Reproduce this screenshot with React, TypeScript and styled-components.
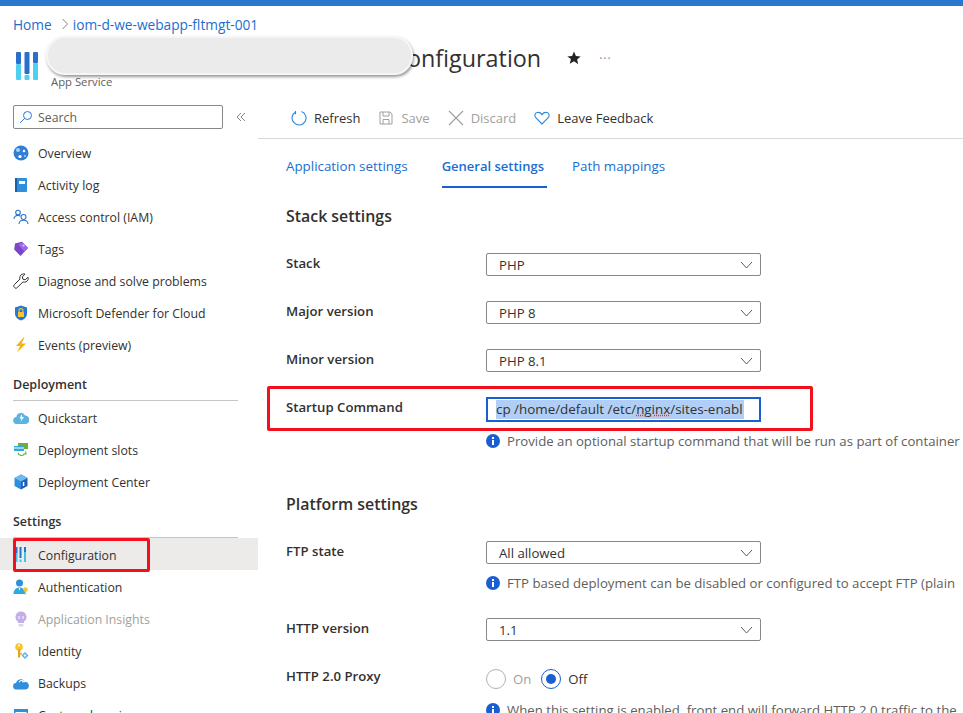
import React from 'react';
import styled, { createGlobalStyle } from 'styled-components';

const GlobalStyle = createGlobalStyle`
  html, body {
    margin: 0;
    padding: 0;
    background: #fff;
  }
  body {
    font-family: "Open Sans", "Noto Sans", "Liberation Sans", sans-serif;
    font-size: 12.3px;
    color: #323130;
  }
`;

const Page = styled.div`
  height: 713px;
  overflow: hidden;
  display: flex;
  flex-direction: column;
`;

const TopBar = styled.div`
  height: 6px;
  flex: none;
  background: #2a77d0;
`;

const Breadcrumb = styled.nav`
  height: 36px;
  flex: none;
  display: flex;
  align-items: center;
  padding-left: 13px;
  white-space: nowrap;
`;

const Crumb = styled.a`
  color: #1b6ed0;
  font-size: 13.7px;
`;

const CrumbSep = styled.svg`
  width: 8px;
  height: 12px;
  margin: 0 4px 0 9px;
  fill: none;
  stroke: #8a8886;
  stroke-width: 1;
`;

const Header = styled.header`
  position: relative;
  height: 58px;
  flex: none;
  display: flex;
  align-items: flex-start;
  padding-left: 16px;
`;

const HeaderLogo = styled.svg`
  width: 23px;
  height: 29px;
  margin-top: 10px;
  flex: none;
`;

const TitleBlock = styled.div`
  margin-left: 12px;
  white-space: nowrap;
`;

const Title = styled.h1`
  margin: 0;
  height: 32px;
  font-size: 23.35px;
  line-height: 32px;
  font-weight: 400;
  color: #323130;
`;

const Subtitle = styled.div`
  font-size: 11.3px;
  line-height: 16px;
  color: #605e5c;
`;

const Redaction = styled.div`
  position: absolute;
  left: 46px;
  top: -6px;
  width: 367px;
  height: 39px;
  box-sizing: border-box;
  border: 2px solid #f6f6f6;
  border-radius: 19px;
  background: #ebebeb;
  box-shadow: 1px 2px 3px rgba(0, 0, 0, 0.4);
`;

const StarIcon = styled.svg`
  width: 14px;
  height: 14px;
  margin: 9px 0 0 26px;
  flex: none;
  fill: #252423;
`;

const More = styled.span`
  margin: 9px 0 0 18px;
  font-size: 12px;
  line-height: 16px;
  letter-spacing: 1px;
  color: #8a8886;
`;

const Body = styled.div`
  flex: 1;
  min-height: 0;
  display: flex;
`;

const Sidebar = styled.aside`
  width: 258px;
  flex: none;
  white-space: nowrap;
`;

const SearchRow = styled.div`
  height: 36px;
  display: flex;
  align-items: flex-start;
  padding: 5px 0 0 13px;
  box-sizing: border-box;
`;

const SearchBox = styled.div`
  width: 210px;
  height: 24px;
  box-sizing: border-box;
  border: 1px solid #8a8886;
  border-radius: 2px;
  display: flex;
  align-items: center;
  padding-left: 5px;
  gap: 5px;
  color: #605e5c;
`;

const CollapseIcon = styled.svg`
  width: 10px;
  height: 10px;
  margin: 7px 0 0 13px;
  fill: none;
  stroke: #8a8886;
  stroke-width: 1;
`;

const NavRow = styled.div<{ $active?: boolean; $muted?: boolean }>`
  position: relative;
  height: 32px;
  display: flex;
  align-items: center;
  padding: 2px 0 0 13px;
  box-sizing: border-box;
  background: ${({ $active }) => ($active ? '#edebe9' : 'transparent')};
  color: ${({ $muted }) => ($muted ? '#a19f9d' : '#323130')};
`;

const NavIcon = styled.svg<{ $muted?: boolean }>`
  width: 16px;
  height: 16px;
  flex: none;
  margin-right: 9px;
  opacity: ${({ $muted }) => ($muted ? 0.5 : 1)};
`;

const SectionTitle = styled.div`
  margin: 13px 20px 0 13px;
  height: 28px;
  box-sizing: border-box;
  border-bottom: 1px solid #c8c6c4;
  font-size: 12.5px;
  font-weight: 600;
  line-height: 24px;
  color: #323130;
`;

const Highlight = styled.div<{ $left: number; $top: number; $width: number; $height: number }>`
  position: absolute;
  left: ${({ $left }) => $left}px;
  top: ${({ $top }) => $top}px;
  width: ${({ $width }) => $width}px;
  height: ${({ $height }) => $height}px;
  box-sizing: border-box;
  border: 3px solid #f2101c;
  border-radius: 2px;
  pointer-events: none;
`;

const Main = styled.main`
  flex: 1;
  min-width: 0;
  white-space: nowrap;
  font-size: 13.2px;
`;

const Toolbar = styled.div`
  height: 39px;
  box-sizing: border-box;
  border-bottom: 1px solid #d8d8d8;
  display: flex;
  align-items: center;
  padding: 0 0 2px 33px;
  gap: 18px;
  font-size: 13px;
`;

const ToolButton = styled.div<{ $disabled?: boolean }>`
  display: flex;
  align-items: center;
  gap: 7px;
  color: ${({ $disabled }) => ($disabled ? '#a19f9d' : '#323130')};
`;

const ToolIcon = styled.svg`
  width: 16px;
  height: 16px;
  flex: none;
  fill: none;
`;

const Tabs = styled.div`
  height: 49px;
  display: flex;
  padding-left: 28px;
`;

const Tab = styled.div<{ $active?: boolean }>`
  height: 49px;
  box-sizing: border-box;
  padding-top: 17px;
  margin-right: ${({ $active }) => ($active ? '25px' : '34px')};
  padding-right: ${({ $active }) => ($active ? '3px' : '0')};
  line-height: 20px;
  color: #1b6ed0;
  font-size: ${({ $active }) => ($active ? '13px' : '13.35px')};
  font-weight: ${({ $active }) => ($active ? 600 : 400)};
  border-bottom: 2px solid ${({ $active }) => ($active ? '#1a5fd0' : 'transparent')};
`;

const Content = styled.div`
  padding-left: 28px;
`;

const Heading = styled.h2<{ $top: number }>`
  margin: ${({ $top }) => $top}px 0 25px;
  height: 23px;
  font-size: 15.9px;
  line-height: 23px;
  font-weight: 600;
  color: #323130;
`;

const Field = styled.div`
  position: relative;
  display: grid;
  grid-template-columns: 200px 275px;
  margin-bottom: 25px;
`;

const FieldLabel = styled.label`
  line-height: 20px;
  font-weight: 600;
  color: #323130;
`;

const Select = styled.div`
  height: 23px;
  box-sizing: border-box;
  border: 1px solid #8a8886;
  border-radius: 2px;
  display: flex;
  align-items: center;
  justify-content: space-between;
  padding: 1px 7px 0 12px;
`;

const Chevron = styled.svg`
  width: 13px;
  height: 8px;
  fill: none;
  stroke: #605e5c;
  stroke-width: 1;
`;

const CommandInput = styled.div`
  height: 25px;
  box-sizing: border-box;
  border: 2px solid #1a5fd0;
  display: flex;
  align-items: center;
  padding-left: 8px;
  overflow: hidden;
`;

const Selected = styled.span`
  display: block;
  width: 248px;
  overflow: hidden;
  font-size: 13.4px;
  line-height: 19px;
  background: #b1cff5;
  color: #323130;
`;

const Misspelled = styled.span`
  text-decoration: underline dotted #e0303a;
`;

const Note = styled.div`
  margin: 9px 0 1px;
  height: 19px;
  width: 476px;
  display: flex;
  align-items: center;
  gap: 7px;
  color: #605e5c;
`;

const InfoIcon = styled.svg`
  width: 14px;
  height: 14px;
  flex: none;
`;

const RadioGroup = styled.div`
  height: 25px;
  margin-bottom: 5px;
  display: flex;
  align-items: center;
`;

const Radio = styled.span<{ $checked?: boolean }>`
  width: 20px;
  height: 20px;
  box-sizing: border-box;
  border-radius: 50%;
  border: 1px solid ${({ $checked }) => ($checked ? '#1a5fd0' : '#b3b0ad')};
  display: flex;
  align-items: center;
  justify-content: center;
  &::after {
    content: '';
    width: 10px;
    height: 10px;
    border-radius: 50%;
    background: ${({ $checked }) => ($checked ? '#1a5fd0' : 'transparent')};
  }
`;

const RadioText = styled.span<{ $muted?: boolean }>`
  margin: 0 10px 0 7px;
  color: ${({ $muted }) => ($muted ? '#a19f9d' : '#323130')};
`;

const logoBars = [
  { x: 0, top: 12, gap: 0 },
  { x: 8.5, top: 22, gap: 1 },
  { x: 17, top: 11, gap: 0 },
];

const AppLogo = () => (
  <>
    {logoBars.map(({ x, top, gap }) => (
      <g key={x}>
        <rect x={x} y="0" width="5" height={top} fill="#2a6fc9" rx="1" />
        <rect x={x} y={top + gap} width="5" height={28 - top - gap} fill="#4fd0f0" rx="1" />
      </g>
    ))}
  </>
);

const Caret = () => (
  <Chevron viewBox="0 0 13 8">
    <path d="M1 1l5.5 6L12 1" />
  </Chevron>
);

const Info = () => (
  <InfoIcon viewBox="0 0 14 14">
    <circle cx="7" cy="7" r="7" fill="#1a5fd0" />
    <rect x="6" y="6" width="2" height="5" fill="#fff" />
    <rect x="6" y="3" width="2" height="2" fill="#fff" />
  </InfoIcon>
);

const icons: Record<string, React.ReactNode> = {
  overview: (
    <>
      <circle cx="8" cy="8" r="7.5" fill="#2f7fd6" />
      <circle cx="5" cy="5" r="2" fill="#a9d3f5" />
      <circle cx="11" cy="6" r="1.3" fill="#fff" />
      <circle cx="7" cy="11.5" r="1.6" fill="#fff" />
      <circle cx="12" cy="11" r="1" fill="#a9d3f5" />
    </>
  ),
  log: (
    <>
      <rect x="2" y="1" width="12" height="14" rx="1" fill="#2f8fdc" />
      <rect x="2" y="1" width="2" height="14" fill="#1b5ea8" />
      <rect x="6" y="4" width="6" height="3" fill="#fff" />
    </>
  ),
  iam: (
    <g fill="none" stroke="#2b78d0" strokeWidth="1.1">
      <circle cx="5" cy="3.6" r="2.3" />
      <path d="M1 10c0-2.4 1.6-3.6 4-3.6 1 0 1.7.2 2.3.5" />
      <circle cx="10.5" cy="8" r="2.5" />
      <path d="M6 15c.2-2.6 2-3.8 4.5-3.8S14.800 12.400 15 15" />
    </g>
  ),
  tags: (
    <>
      <path d="M9 .8l6 6.200-7.500 8-6.300-6.500L2 2.500z" fill="#7a45c9" />
      <path d="M9 .8l6 6.200-3.500 3.700-6-7L9 1z" fill="#9b6be0" />
      <circle cx="10.500" cy="4.500" r="1.100" fill="#d9c6f5" />
    </>
  ),
  wrench: (
    <path
      d="M15 4.200l-2.800 2.600-2.300-.6-.6-2.300L12 1.100c-2-.7-4.200.3-5 2.300-.3.900-.3 1.800 0 2.600L1.200 11.800c-.7.700-.7 1.800 0 2.400l.5.500c.7.700 1.700.7 2.400 0L9.900 9c2.300.7 4.500-.4 5.200-2.500.2-.8.200-1.600-.1-2.300z"
      fill="none"
      stroke="#323130"
      strokeWidth="1"
    />
  ),
  shield: (
    <>
      <path d="M8 .5l6 2v6c0 3.500-2.800 6-6 7-3.200-1-6-3.500-6-7v-6z" fill="#2b78d0" />
      <rect x="5" y="7" width="6" height="5" rx=".6" fill="#f6c52f" />
      <path d="M6 7V5.600a2 2 0 014 0V7" fill="none" stroke="#f6c52f" strokeWidth="1.100" />
    </>
  ),
  bolt: <path d="M10.500 .5L3 9h4l-3 6.500L13 6.500H8.500L11.500.5z" fill="#f5b50f" />,
  quickstart: (
    <>
      <path d="M4 14a3.500 3.500 0 01-.6-7A4.500 4.500 0 0112 5.500 4.200 4.200 0 0112.200 14z" fill="#5bb4df" />
      <path d="M9 4L6.500 8.500h2L7.500 12l3.500-5H9z" fill="#fff" />
    </>
  ),
  slots: (
    <>
      <rect x="5" y="1" width="10" height="6" fill="#6fae3c" />
      <rect x="1" y="4" width="10" height="5" fill="#2fa8e0" />
      <rect x="1" y="5.500" width="10" height="1" fill="#fff" />
      <path d="M5 11c.6 2.800 5 3.600 7 .5M12.800 9.500v2.500h-2.500" fill="none" stroke="#6fae3c" strokeWidth="1.200" />
    </>
  ),
  cube: (
    <>
      <path d="M8 .5l6.500 3.500v8L8 15.500z" fill="#1d5fb8" />
      <path d="M8 .5L1.500 4v8L8 15.500z" fill="#2f8fdc" />
      <path d="M8 .5l6.500 3.500L8 7.500 1.500 4z" fill="#6bbcf0" />
      <rect x="9.800" y="8" width="1.500" height="4" fill="#fff" />
    </>
  ),
  config: (
    <>
      <rect x="2.500" y="0" width="2" height="6" fill="#2a6fc9" />
      <rect x="2.500" y="6" width="2" height="9" fill="#38c4ee" />
      <rect x="6.500" y="0" width="2" height="11" fill="#2a6fc9" />
      <rect x="6.500" y="12.500" width="2" height="2.500" fill="#38c4ee" />
      <rect x="11" y="0" width="2" height="5" fill="#2a6fc9" />
      <rect x="11" y="5" width="2" height="10" fill="#38c4ee" />
    </>
  ),
  auth: (
    <>
      <circle cx="6.500" cy="4" r="3.500" fill="#2f8fdc" />
      <path d="M.5 15c0-4 2.500-6.500 6-6.500s6 2.500 6 6.500z" fill="#2fa8e0" />
      <path d="M5.800 9l.7 3 .7-3z" fill="#fff" />
      <circle cx="12.500" cy="10.500" r="2.300" fill="#f6c52f" />
      <rect x="11.800" y="11" width="1.400" height="4.500" fill="#f6c52f" />
    </>
  ),
  insights: (
    <>
      <path d="M8 .5a5.500 5.500 0 00-3 10.100V12h6v-1.400A5.500 5.500 0 008 .5z" fill="#8a5fd6" />
      <rect x="5.500" y="13" width="5" height="2.500" rx="1" fill="#b9a6e3" />
      <path d="M6 5v3M10 5v3" stroke="#fff" strokeWidth="1" />
    </>
  ),
  identity: (
    <>
      <circle cx="6" cy="4" r="3.800" fill="#f6c52f" />
      <rect x="5" y="6" width="2.200" height="8.500" fill="#e6a90f" />
      <rect x="7" y="10" width="2" height="1.500" fill="#e6a90f" />
      <circle cx="6" cy="2.600" r="1" fill="#fff" />
      <path d="M12 9l3.500 3.500L12 16l-3.500-3.500z" fill="#5bb4df" />
      <path d="M12 11l1.500 1.500L12 14l-1.500-1.500z" fill="#fff" />
    </>
  ),
  backups: (
    <>
      <path d="M3.500 14.500a3.200 3.200 0 01-.4-6.400A5 5 0 0112.500 7a3.800 3.800 0 01.3 7.500z" fill="#2f8fdc" />
      <path d="M6 7.200c1-2 3.500-2.300 5-.9M11.400 4.500v2.200H9.200" fill="none" stroke="#fff" strokeWidth="1.100" />
    </>
  ),
  domains: (
    <>
      <rect x="1" y="2" width="14" height="12" fill="#2f8fdc" />
      <rect x="2.500" y="5" width="11" height="7" fill="#fff" />
    </>
  ),
};

const NavItem = ({
  icon,
  label,
  active,
  muted,
  children,
}: {
  icon: string;
  label: string;
  active?: boolean;
  muted?: boolean;
  children?: React.ReactNode;
}) => (
  <NavRow $active={active} $muted={muted}>
    <NavIcon viewBox="0 0 16 16" $muted={muted}>
      {icons[icon]}
    </NavIcon>
    {label}
    {children}
  </NavRow>
);

const App = () => {
  return (
    <Page>
      <GlobalStyle />
      <TopBar />
      <Breadcrumb>
        <Crumb>Home</Crumb>
        <CrumbSep viewBox="0 0 8 12">
          <path d="M1.500 1l5 5-5 5" />
        </CrumbSep>
        <Crumb>iom-d-we-webapp-fltmgt-001</Crumb>
      </Breadcrumb>
      <Header>
        <HeaderLogo viewBox="0 0 23 29">
          <AppLogo />
        </HeaderLogo>
        <TitleBlock>
          <Title>iom-d-we-webapp-fltmgt-001 | Configuration</Title>
          <Subtitle>App Service</Subtitle>
        </TitleBlock>
        <StarIcon viewBox="0 0 14 14">
          <path d="M7 .5l1.900 4.500 4.800.4-3.600 3.100 1.100 4.700L7 10.200l-4.200 2.500 1.100-4.700L.3 5.400l4.800-.4z" />
        </StarIcon>
        <More>···</More>
        <Redaction />
      </Header>
      <Body>
        <Sidebar>
          <SearchRow>
            <SearchBox>
              <svg width="14" height="14" viewBox="0 0 14 14" fill="none" stroke="#2b78d0" strokeWidth="1">
                <circle cx="8.500" cy="5.500" r="4" />
                <path d="M5.500 8.500L1 13" />
              </svg>
              Search
            </SearchBox>
            <CollapseIcon viewBox="0 0 10 10">
              <path d="M5 1L1 5l4 4M9 1L5 5l4 4" />
            </CollapseIcon>
          </SearchRow>
          <NavItem icon="overview" label="Overview" />
          <NavItem icon="log" label="Activity log" />
          <NavItem icon="iam" label="Access control (IAM)" />
          <NavItem icon="tags" label="Tags" />
          <NavItem icon="wrench" label="Diagnose and solve problems" />
          <NavItem icon="shield" label="Microsoft Defender for Cloud" />
          <NavItem icon="bolt" label="Events (preview)" />
          <SectionTitle>Deployment</SectionTitle>
          <NavItem icon="quickstart" label="Quickstart" />
          <NavItem icon="slots" label="Deployment slots" />
          <NavItem icon="cube" label="Deployment Center" />
          <SectionTitle>Settings</SectionTitle>
          <NavItem icon="config" label="Configuration" active>
            <Highlight $left={13} $top={0} $width={137} $height={34} />
          </NavItem>
          <NavItem icon="auth" label="Authentication" />
          <NavItem icon="insights" label="Application Insights" muted />
          <NavItem icon="identity" label="Identity" />
          <NavItem icon="backups" label="Backups" />
          <NavItem icon="domains" label="Custom domains" />
        </Sidebar>
        <Main>
          <Toolbar>
            <ToolButton>
              <ToolIcon viewBox="0 0 16 16" stroke="#2b88d8" strokeWidth="1.100">
                <path d="M10.500 1.400A7 7 0 114.500 1.900M4.500 1v3.300" />
              </ToolIcon>
              Refresh
            </ToolButton>
            <ToolButton $disabled>
              <ToolIcon viewBox="0 0 16 16" stroke="#a19f9d" strokeWidth="1">
                <path d="M2 2h10l2 2v10H2zM5 2v4h6V2M5 14V9.500h6V14" />
              </ToolIcon>
              Save
            </ToolButton>
            <ToolButton $disabled>
              <ToolIcon viewBox="0 0 16 16" stroke="#a19f9d" strokeWidth="1.100">
                <path d="M1 1l14 14M15 1L1 15" />
              </ToolIcon>
              Discard
            </ToolButton>
            <ToolButton>
              <ToolIcon viewBox="0 0 16 16" stroke="#2b88d8" strokeWidth="1.100">
                <path d="M8 14L1.800 7.600C.2 6 .8 3 3.200 2.500 5 2.100 7 3 8 4.600 9 3 11 2.100 12.800 2.500c2.400.5 3 3.500 1.400 5.100z" />
              </ToolIcon>
              Leave Feedback
            </ToolButton>
          </Toolbar>
          <Tabs>
            <Tab>Application settings</Tab>
            <Tab $active>General settings</Tab>
            <Tab>Path mappings</Tab>
          </Tabs>
          <Content>
            <Heading $top={17}>Stack settings</Heading>
            <Field>
              <FieldLabel>Stack</FieldLabel>
              <Select>
                PHP
                <Caret />
              </Select>
            </Field>
            <Field>
              <FieldLabel>Major version</FieldLabel>
              <Select>
                PHP 8
                <Caret />
              </Select>
            </Field>
            <Field>
              <FieldLabel>Minor version</FieldLabel>
              <Select>
                PHP 8.1
                <Caret />
              </Select>
            </Field>
            <Field>
              <FieldLabel>Startup Command</FieldLabel>
              <div>
                <CommandInput>
                  <Selected>
                    cp /home/default /etc/<Misspelled>nginx</Misspelled>/sites-enabl
                  </Selected>
                </CommandInput>
                <Note>
                  <Info />
                  Provide an optional startup command that will be run as part of container
                </Note>
              </div>
              <Highlight $left={-19} $top={-11} $width={546} $height={45} />
            </Field>
            <Heading $top={42}>Platform settings</Heading>
            <Field>
              <FieldLabel>FTP state</FieldLabel>
              <div>
                <Select>
                  All allowed
                  <Caret />
                </Select>
                <Note>
                  <Info />
                  FTP based deployment can be disabled or configured to accept FTP (plain
                </Note>
              </div>
            </Field>
            <Field>
              <FieldLabel>HTTP version</FieldLabel>
              <Select>
                1.1
                <Caret />
              </Select>
            </Field>
            <Field>
              <FieldLabel>HTTP 2.0 Proxy</FieldLabel>
              <div>
                <RadioGroup>
                  <Radio />
                  <RadioText $muted>On</RadioText>
                  <Radio $checked />
                  <RadioText>Off</RadioText>
                </RadioGroup>
                <Note>
                  <Info />
                  When this setting is enabled, front end will forward HTTP 2.0 traffic to the
                </Note>
              </div>
            </Field>
          </Content>
        </Main>
      </Body>
    </Page>
  );
};

export default App;
